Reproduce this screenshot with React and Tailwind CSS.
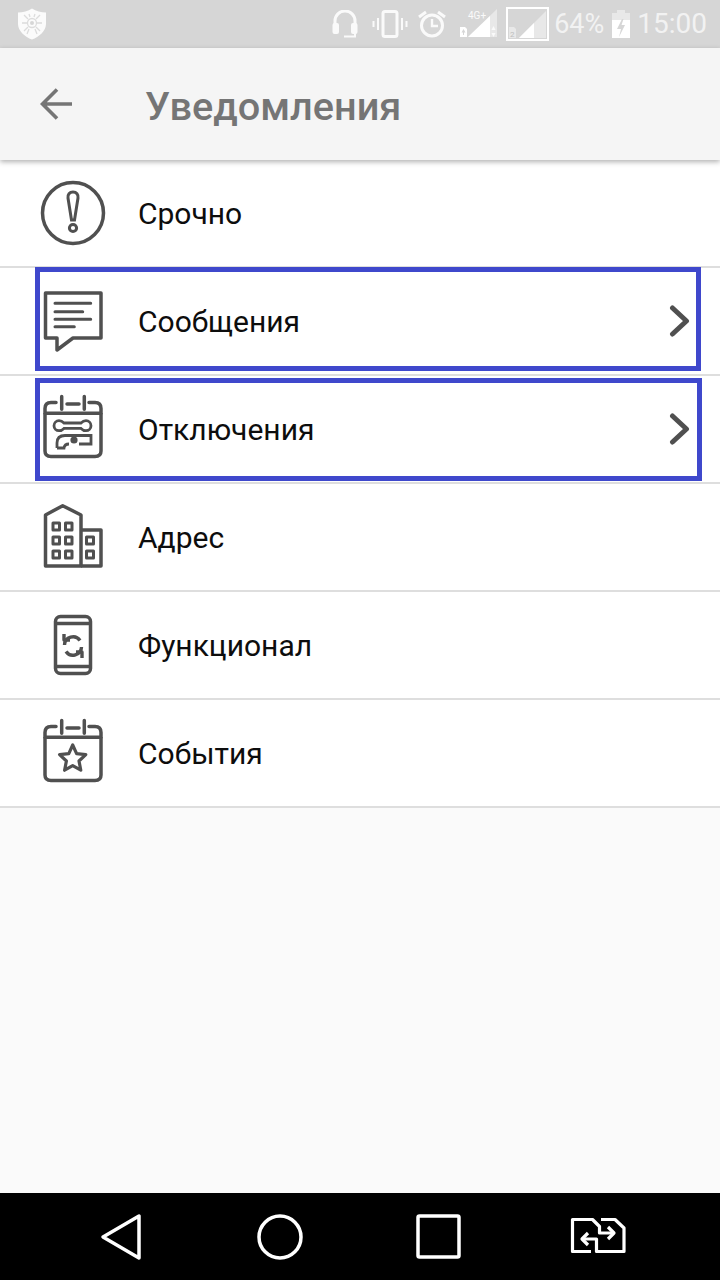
const font = { fontFamily: "Roboto, sans-serif" };

const Shield = () => (
  <svg width="28" height="32" viewBox="0 0 28 32" className="ml-[18px]">
    <path d="M14 0.5 C18 3 23 4.5 28 4.5 V16 C28 23 21 29 14 31.5 C7 29 0 23 0 16 V4.5 C5 4.5 10 3 14 0.5Z" fill="#fbfbfb" />
    <g stroke="#dcdcdc" strokeWidth="1.3" fill="none">
      <circle cx="14" cy="15" r="4.5" />
      <path d="M10 11 L6 7 M18 11 L22 7 M9 15 H4 M19 15 H24 M10 19 L6 23 M18 19 L22 23 M11 21 L9 26 M17 21 L19 26 M12 9 L11 6 M16 9 L17 6" />
    </g>
    <circle cx="14" cy="15" r="2" fill="#d6d6d6" />
  </svg>
);

const Headphones = () => (
  <svg width="26" height="28" viewBox="0 0 26 28" className="ml-auto">
    <path d="M3 16 V11 A10 10 0 0 1 23 11 V16" stroke="#fafafa" strokeWidth="3" fill="none" />
    <rect x="0.5" y="13" width="6.5" height="11" rx="2" fill="#fafafa" />
    <rect x="19" y="13" width="6.5" height="11" rx="2" fill="#fafafa" />
    <path d="M23 24 V26.5 H12" stroke="#fafafa" strokeWidth="2" fill="none" />
  </svg>
);

const Vibrate = () => (
  <svg width="36" height="28" viewBox="0 0 36 28" className="ml-[14px]">
    <rect x="11" y="1.5" width="14" height="25" rx="2" stroke="#fafafa" strokeWidth="3" fill="none" />
    <path d="M6 8 V20 M1.5 11 V17 M30 8 V20 M34.5 11 V17" stroke="#fafafa" strokeWidth="2" />
  </svg>
);

const Alarm = () => (
  <svg width="30" height="28" viewBox="0 0 30 28" className="ml-[9px]">
    <circle cx="15" cy="15.5" r="10.5" stroke="#fafafa" strokeWidth="3" fill="none" />
    <path d="M15 9 V16 H21" stroke="#fafafa" strokeWidth="2.4" fill="none" />
    <path d="M2 7 L9 2 M28 7 L21 2" stroke="#fafafa" strokeWidth="3" />
  </svg>
);

const SignalOne = () => (
  <svg width="40" height="32" viewBox="0 0 40 32" className="ml-[12px]">
    <path d="M9 29 L38 1 V29Z" fill="#e8e8e8" />
    <path d="M9 29 L31 8 V29Z" fill="#fff" />
    <path d="M1 19 H6 L8 21 V29 H1Z" fill="#fff" />
    <path d="M4.5 21 L2.5 24.5 H4 V27 H5 V24.5 H6.5Z" fill="#d6d6d6" />
    <path d="M34.5 18 L32.5 22 H36.5Z M34.5 29 L32.5 25 H36.5Z" fill="#fafafa" />
    <text x="9" y="11" fontSize="10" fill="#fafafa" style={font}>4G+</text>
  </svg>
);

const SignalTwo = () => (
  <svg width="44" height="34" viewBox="0 0 44 34" className="ml-[7px]">
    <rect x="1" y="1" width="41" height="32" fill="none" stroke="#fff" strokeWidth="2" />
    <path d="M13 31 L40 4 V31Z" fill="#e8e8e8" />
    <path d="M13 31 L28 16 V31Z" fill="#fff" />
    <path d="M3 20 H8 L10 22 V31 H3Z" fill="#e8e8e8" />
    <text x="4" y="30" fontSize="8" fill="#bdbdbd" style={font}>2</text>
  </svg>
);

const Battery = () => (
  <svg width="18" height="28" viewBox="0 0 18 28" className="ml-[8px]">
    <path d="M5 0 H13 V3 H18 V28 H0 V3 H5Z" fill="#e8e8e8" />
    <path d="M0 10 H18 V28 H0Z" fill="#fff" />
    <path d="M10 9 L5 19 H9 L7 27 L13 15 H9.5 L11.5 9Z" fill="#d6d6d6" />
  </svg>
);

const BackArrow = () => (
  <svg width="34" height="34" viewBox="0 0 34 34" className="ml-[40px]">
    <path d="M32 17 H3 M17 2.5 L2.5 17 L17 31.5" stroke="#757575" strokeWidth="3.6" fill="none" />
  </svg>
);

const icon = { width: 72, height: 72, viewBox: "0 0 72 72", fill: "none", stroke: "#505050", strokeWidth: 3.5 };

const AlertIcon = () => (
  <svg {...icon}>
    <circle cx="36" cy="36" r="30.5" />
    <path d="M36 15 C32.5 15 30.5 17.5 31 21 L34.5 43 H37.5 L41 21 C41.5 17.5 39.5 15 36 15Z" strokeWidth="3" />
    <circle cx="36" cy="51" r="3.6" strokeWidth="3" />
  </svg>
);

const MessageIcon = () => (
  <svg {...icon} strokeLinejoin="round">
    <path d="M8.5 8 H64 V53 H36 L20 65 V53 H8.5Z" />
    <path d="M18 18.3 H53.7 M18 26.7 H45.7 M18 34.3 H53.7 M18 41.7 H37.3" strokeLinecap="round" strokeWidth="3" />
  </svg>
);

const CalendarTop = () => (
  <path d="M19 9.5 H14 Q8 9.5 8 15.5 V20.3 M52 9.5 H58 Q64 9.5 64 15.5 V20.3 M24.7 3.5 V16.3 M47.3 3.5 V16.3 M30 11 H42 M8 20.3 H64" strokeLinecap="round" />
);

const OutageIcon = () => (
  <svg {...icon}>
    <CalendarTop />
    <path d="M8 20 V58 Q8 63.5 14 63.5 H58 Q64 63.5 64 58 V20" />
    <g strokeWidth="2.8">
      <path d="M22 27.7 C24.5 27.7 26 29 27 30 H44 C45 29 46.5 27.7 49 27.7 A5 5 0 0 1 49 37.7 C46.5 37.7 45 36.4 44 35.4 H27 C26 36.4 24.5 37.7 22 37.7 A5 5 0 0 1 22 27.7Z" />
      <path d="M20 55 V50 Q20 42.5 28 42.5 H54 V51 H42 M32 51 Q27.5 51 27 55 H20" />
      <circle cx="37" cy="47" r="3.6" fill="#505050" strokeWidth="0" />
    </g>
  </svg>
);

const BuildingIcon = () => (
  <svg {...icon} strokeLinejoin="round">
    <path d="M8.5 65 V14 L25.7 4.7 L44 14 V65 Z" />
    <path d="M44 29 H64 V65 H44" />
    <g strokeWidth="3">
      <rect x="16" y="22" width="6.5" height="7" />
      <rect x="28.5" y="22" width="6.5" height="7" />
      <rect x="16" y="36" width="6.5" height="7" />
      <rect x="28.5" y="36" width="6.5" height="7" />
      <rect x="16" y="50" width="6.5" height="7" />
      <rect x="28.5" y="50" width="6.5" height="7" />
      <rect x="49.5" y="36" width="7" height="7" />
      <rect x="49.5" y="50" width="7" height="7" />
    </g>
  </svg>
);

const PhoneIcon = () => (
  <svg {...icon}>
    <rect x="18.5" y="7.5" width="35" height="57" rx="5" />
    <path d="M18.5 14.5 H53.5 M18.5 57.5 H53.5" />
    <path d="M27.5 36 A8.5 8.5 0 0 1 43 31.5 M44.5 38 A8.5 8.5 0 0 1 29 42.5" strokeWidth="3.4" />
    <path d="M27 25 V31 H33 M45 49 V43 H39" strokeWidth="3.4" strokeLinejoin="round" />
  </svg>
);

const EventIcon = () => (
  <svg {...icon}>
    <CalendarTop />
    <path d="M8 20 V58 Q8 63.5 14 63.5 H58 Q64 63.5 64 58 V20" />
    <path d="M35.7 28 L39.6 36.6 L48.8 37.6 L42 44 L43.8 53.2 L35.7 48.6 L27.6 53.2 L29.4 44 L22.6 37.6 L31.8 36.6Z" strokeLinejoin="round" strokeWidth="3.2" />
  </svg>
);

const Chevron = () => (
  <svg width="24" height="32" viewBox="0 0 24 32" className="absolute left-[669px] top-[37px]">
    <path d="M3.5 3 L17.5 16 L3.5 29" stroke="#505050" strokeWidth="5" strokeLinecap="round" strokeLinejoin="round" fill="none" />
  </svg>
);

const rows = [
  { title: "Срочно", Icon: AlertIcon },
  { title: "Сообщения", Icon: MessageIcon, boxed: "top-[-1px] h-[104px] w-[666px]", more: true },
  { title: "Отключения", Icon: OutageIcon, boxed: "top-[2px] h-[103px] w-[667px]", more: true },
  { title: "Адрес", Icon: BuildingIcon },
  { title: "Функционал", Icon: PhoneIcon },
  { title: "События", Icon: EventIcon },
];

const NavBar = () => (
  <div className="flex h-[87px] items-center bg-black">
    <svg width="44" height="48" viewBox="0 0 44 48" className="ml-[99px]">
      <path d="M40 3 V45 L4 24Z" stroke="#fff" strokeWidth="3.5" strokeLinejoin="round" fill="none" />
    </svg>
    <svg width="48" height="48" viewBox="0 0 48 48" className="ml-[113px]">
      <circle cx="24" cy="24" r="21" stroke="#fff" strokeWidth="3.5" fill="none" />
    </svg>
    <svg width="48" height="48" viewBox="0 0 48 48" className="ml-[110px]">
      <rect x="4" y="3" width="41" height="41" rx="1.5" stroke="#fff" strokeWidth="3.5" fill="none" />
    </svg>
    <svg width="76" height="56" viewBox="0 0 76 56" className="ml-[99px]">
      <g stroke="#fff" strokeWidth="3.2" fill="none" strokeLinejoin="round">
        <path d="M30 42.5 H11.5 V10.5 H31.5 L38.5 17.5 V24 H52" />
        <path d="M47 18 L53 24 L47 30" />
        <path d="M40 10.5 H54 L63 19 V42.5 H35.5 V30 H22" />
        <path d="M27 24 L21 30 L27 36" />
      </g>
    </svg>
  </div>
);

const App = () => {
  return (
    <div className="flex h-[1280px] w-[720px] flex-col bg-[#fafafa]" style={font}>
      <div className="flex h-12 shrink-0 items-center bg-[#d6d6d6] pr-[13px]">
        <Shield />
        <Headphones />
        <Vibrate />
        <Alarm />
        <SignalOne />
        <SignalTwo />
        <span className="ml-[4px] text-[27px] leading-none text-[#f2f2f2]">64%</span>
        <Battery />
        <span className="ml-[7px] text-[28px] leading-none text-[#f2f2f2]">15:00</span>
      </div>

      <div className="relative z-10 flex h-[112px] shrink-0 items-center bg-[#f5f5f5] shadow-[0_2px_5px_rgba(0,0,0,0.3)]">
        <BackArrow />
        <h1 className="ml-[71px] pt-[6px] text-[39.7px] leading-none font-medium text-[#757575]">Уведомления</h1>
      </div>

      <div className="flex-1">
        {rows.map(({ title, Icon, boxed, more }) => (
          <div key={title} className="relative flex h-[108px] items-center border-b-2 border-[#dedede] bg-white">
            <div className="ml-[37px] shrink-0">
              <Icon />
            </div>
            <span className="ml-[29px] text-[30px] text-[#0d0d0d]">{title}</span>
            {more && <Chevron />}
            {boxed && <div className={`absolute left-[35px] border-[5px] border-[#3f48cc] ${boxed}`} />}
          </div>
        ))}
      </div>

      <NavBar />
    </div>
  );
};

export default App;
